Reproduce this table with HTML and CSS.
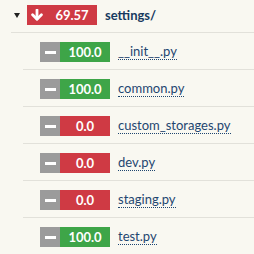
FILE: index.html
```html
<!DOCTYPE html>
<html>
<head>
<meta charset="utf-8">
<link rel="stylesheet" href="styles.css">
</head>
<body>
<div class="tree">
  <div class="row top">
    <span class="caret"></span>
    <span class="badge red">
      <span class="icon"><svg width="12" height="12" viewBox="0 0 12 12"><path d="M6 1 V10" stroke="#fff" stroke-width="2.8" stroke-linecap="round" fill="none"/><path d="M1.6 5.8 L6 10.2 L10.4 5.8" stroke="#fff" stroke-width="2.8" stroke-linecap="round" stroke-linejoin="round" fill="none"/></svg></span>
      <span class="val">69.57</span>
    </span>
    <a class="dir">settings/</a>
  </div>
  <ul class="children">
    <li class="row"><span class="badge green"><span class="icon gray"><span class="minus"></span></span><span class="val">100.0</span></span><a class="file">__init__.py</a></li>
    <li class="row"><span class="badge green"><span class="icon gray"><span class="minus"></span></span><span class="val">100.0</span></span><a class="file">common.py</a></li>
    <li class="row"><span class="badge red"><span class="icon gray"><span class="minus"></span></span><span class="val">0.0</span></span><a class="file">custom_storages.py</a></li>
    <li class="row"><span class="badge red"><span class="icon gray"><span class="minus"></span></span><span class="val">0.0</span></span><a class="file">dev.py</a></li>
    <li class="row"><span class="badge red"><span class="icon gray"><span class="minus"></span></span><span class="val">0.0</span></span><a class="file">staging.py</a></li>
    <li class="row"><span class="badge green"><span class="icon gray"><span class="minus"></span></span><span class="val">100.0</span></span><a class="file">test.py</a></li>
  </ul>
</div>
</body>
</html>
```

FILE: styles.css
```css
html, body {
  margin: 0;
  padding: 0;
  background: #f9f8f1;
  font-family: Lato, "Open Sans", sans-serif;
  font-size: 13px;
  color: #1d3d63;
}
.tree {
  width: 254px;
  overflow: hidden;
}
.row {
  display: flex;
  align-items: center;
  border-bottom: 1px solid #e2e1da;
  list-style: none;
}
.row.top {
  margin-left: 11px;
  padding: 5px 0 7px 3px;
}
.caret {
  width: 0;
  height: 0;
  border-left: 3.5px solid transparent;
  border-right: 3.5px solid transparent;
  border-top: 5px solid #222;
  margin-right: 7px;
}
.badge {
  display: flex;
  height: 20px;
  width: 70px;
  flex-shrink: 0;
}
.badge.red { background: #cf3a44; }
.badge.green { background: #3ea548; }
.icon {
  width: 20px;
  height: 20px;
  display: flex;
  align-items: center;
  justify-content: center;
}
.icon.gray { background: #9b9b9b; }
.minus {
  width: 11px;
  height: 3px;
  background: #fff;
}
.val {
  flex: 1;
  text-align: center;
  color: #fff;
  font-weight: bold;
  line-height: 20px;
  font-size: 13px;
}
.dir {
  margin-left: 8px;
  font-weight: bold;
  color: #173a5f;
}
.children {
  margin: 0 0 0 23px;
  padding: 0;
}
.children .row {
  padding: 9px 0 7px 17px;
}
.file {
  margin-left: 8px;
  margin-bottom: 2px;
  color: #1f4670;
  line-height: 16px;
  border-bottom: 1px dotted #1f4670;
}
```
